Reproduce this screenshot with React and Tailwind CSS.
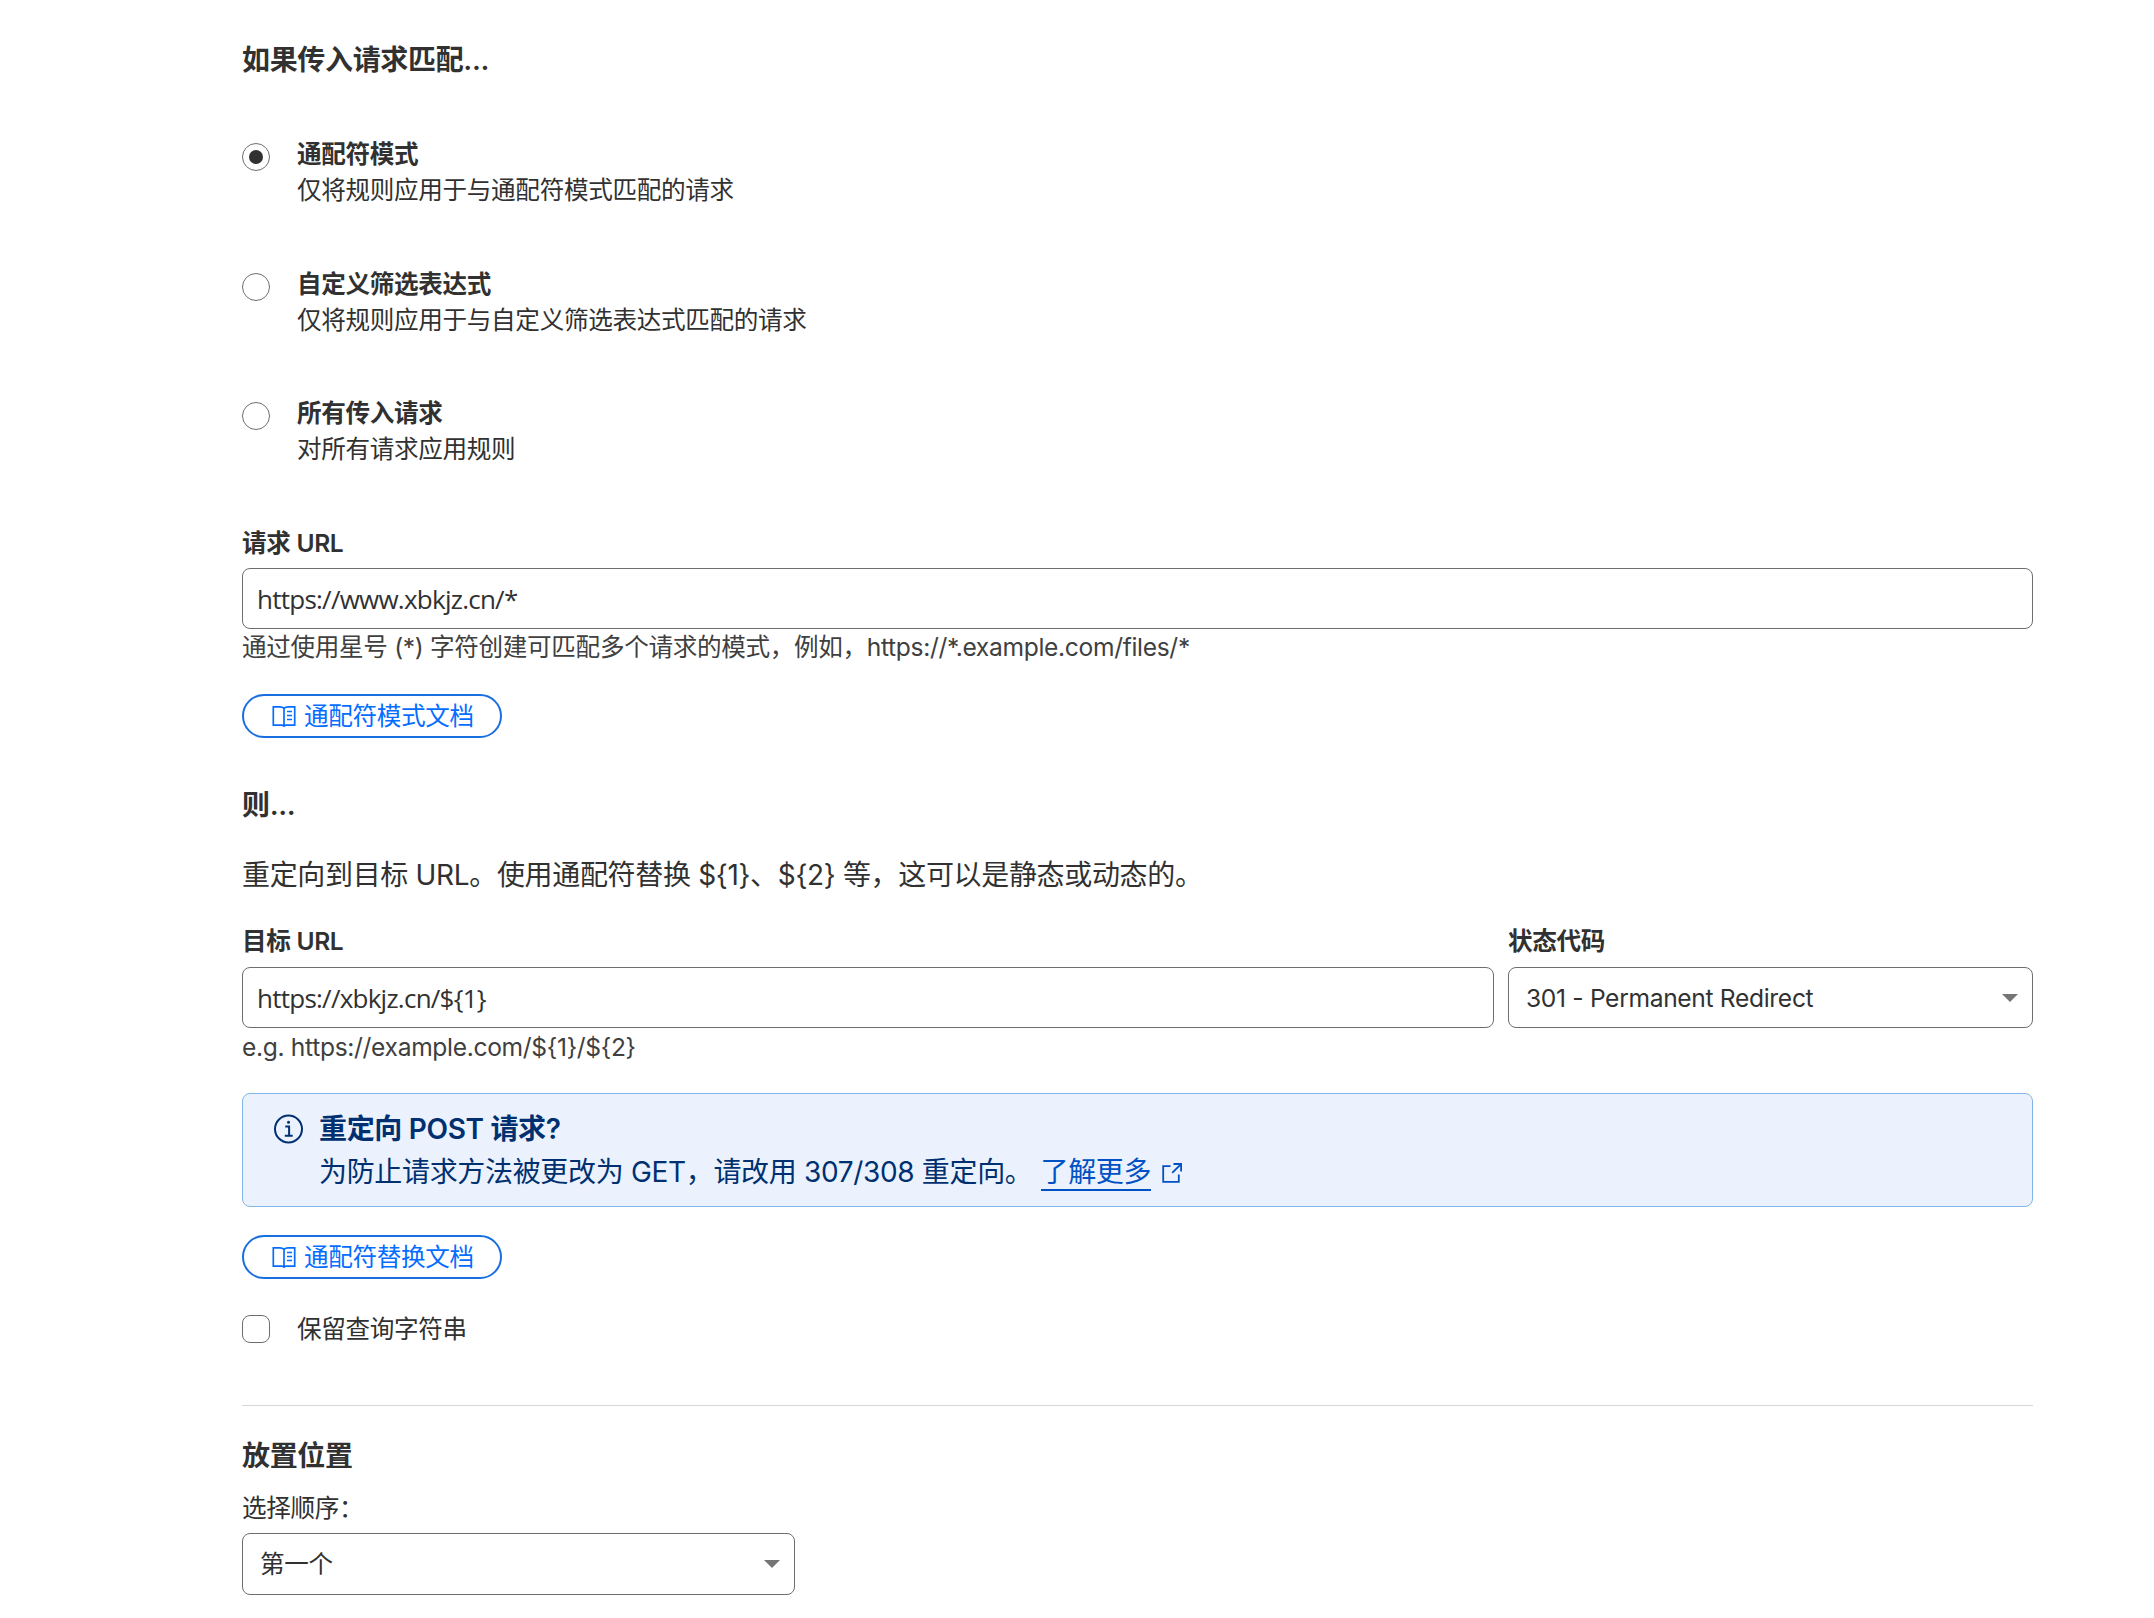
import { useState } from 'react';

const matchOptions = [
  {
    id: 'wildcard',
    title: '通配符模式',
    description: '仅将规则应用于与通配符模式匹配的请求',
  },
  {
    id: 'custom',
    title: '自定义筛选表达式',
    description: '仅将规则应用于与自定义筛选表达式匹配的请求',
  },
  { id: 'all', title: '所有传入请求', description: '对所有请求应用规则' },
];

const BookIcon = () => (
  <svg className="h-6 w-6 shrink-0" viewBox="0 0 24 24" fill="none" stroke="currentColor" strokeWidth="1.7">
    <path d="M12 4.3C10.8 3.2 9.6 2.8 8 2.8H1.3v18.4h8.2c1 0 1.7.3 2.5 1 .8-.7 1.5-1 2.5-1h8.2V2.8H16c-1.6 0-2.8.4-4 1.5zM12 4.3v17.9" />
    <path d="M15 7.500h5M15 11.500h5M15 15.500h5" />
  </svg>
);

const InfoIcon = () => (
  <svg className="h-[30px] w-[30px] shrink-0" viewBox="0 0 30 30" fill="none" stroke="currentColor" strokeWidth="2">
    <circle cx="14.500" cy="15" r="13.500" />
    <path d="M11.300 12.400h3.800v9.200M10.800 21.700h7.900" />
    <circle cx="14.500" cy="8.300" r="1.500" fill="currentColor" stroke="none" />
  </svg>
);

const ExternalIcon = () => (
  <svg className="h-[22px] w-[22px] shrink-0" viewBox="0 0 22 22" fill="none" stroke="currentColor" strokeWidth="1.800">
    <path d="M9.500 4.200H2.200v15.600h15.600v-7.300M12.500 2h7.600v7.600M20 2.100l-8.800 8.800" />
  </svg>
);

const SectionTitle = ({ children, className = '' }) => (
  <h2 className={`text-[28px] leading-[42px] font-semibold ${className}`}>{children}</h2>
);

const FieldLabel = ({ children }) => <label className="block font-semibold">{children}</label>;

const TextField = ({ value, onChange }) => (
  <input
    type="text"
    value={value}
    onChange={(e) => onChange(e.target.value)}
    className="block h-[61px] w-full rounded-lg border border-[#6d6e70] bg-white px-3.5 font-['Open_Sans','Noto_Sans_CJK_SC',sans-serif] text-[26px] tracking-[-0.75px] text-[#313131] outline-none"
  />
);

const SelectBox = ({ children, className = '' }) => (
  <button
    type="button"
    className={`flex w-full items-center justify-between rounded-lg border border-[#6d6e70] bg-white pr-3.5 pl-[17px] text-left tracking-[-0.33px] ${className}`}
  >
    {children}
    <svg className="h-2 w-4" viewBox="0 0 16 8" fill="#757575">
      <path d="M0 0h16L8 8z" />
    </svg>
  </button>
);

const DocLink = ({ children, className = '' }) => (
  <a
    href="#"
    className={`flex h-[44px] w-[260px] items-center gap-2 rounded-full border-2 border-[#1a6fe0] pl-[28px] whitespace-nowrap text-[#056dff] ${className}`}
  >
    <BookIcon />
    {children}
  </a>
);

export default function App() {
  const [mode, setMode] = useState('wildcard');
  const [requestUrl, setRequestUrl] = useState('https://www.xbkjz.cn/*');
  const [targetUrl, setTargetUrl] = useState('https://xbkjz.cn/${1}');
  const [keepQuery, setKeepQuery] = useState(false);

  return (
    <div className="min-h-[1618px] bg-white pt-[39px] pr-[121px] pl-[242px] font-['Inter','Noto_Sans_CJK_SC',sans-serif] text-[24.6px] leading-[36px] tracking-[-0.33px] text-[#313131]">
      <SectionTitle>如果传入请求匹配...</SectionTitle>

      <div className="mt-[55px] flex flex-col gap-[56.5px]">
        {matchOptions.map((option) => (
          <label key={option.id} className="flex items-start gap-[27px]">
            <input
              type="radio"
              name="mode"
              checked={mode === option.id}
              onChange={() => setMode(option.id)}
              className="mt-[7px] grid h-7 w-7 appearance-none place-content-center rounded-full border border-[#6d6e70] before:h-3.5 before:w-3.5 before:rounded-full checked:before:bg-[#313131]"
            />
            <span>
              <span className="block font-semibold">{option.title}</span>
              <span className="block leading-[37px]">{option.description}</span>
            </span>
          </label>
        ))}
      </div>

      <div className="mt-[57px]">
        <FieldLabel>请求 URL</FieldLabel>
        <div className="mt-[7px]">
          <TextField value={requestUrl} onChange={setRequestUrl} />
        </div>
        <p className="text-[#404040]">
          通过使用星号 (*) 字符创建可匹配多个请求的模式，例如，https://*.example.com/files/*
        </p>
      </div>
      <DocLink className="mt-[29px]">通配符模式文档</DocLink>

      <SectionTitle className="mt-[46px]">则...</SectionTitle>
      <p className="mt-7 text-[28px] leading-[42px]">
        {'重定向到目标 URL。使用通配符替换 ${1}、${2} 等，这可以是静态或动态的。'}
      </p>

      <div className="mt-[27px] flex gap-3.5">
        <div className="flex-1">
          <FieldLabel>目标 URL</FieldLabel>
          <div className="mt-2">
            <TextField value={targetUrl} onChange={setTargetUrl} />
          </div>
          <p className="mt-px text-[#404040]">{'e.g. https://example.com/${1}/${2}'}</p>
        </div>
        <div className="w-[525px]">
          <FieldLabel>状态代码</FieldLabel>
          <SelectBox className="mt-2 h-[61px]">301 - Permanent Redirect</SelectBox>
        </div>
      </div>

      <div className="mt-7 flex h-[114px] gap-[15px] rounded-lg border border-[#82b6e8] bg-[#ebf2fe] pt-3.5 pl-[31px] text-[28px] leading-[43px] text-[#003070]">
        <span className="mt-[6px]">
          <InfoIcon />
        </span>
        <div>
          <p className="font-semibold">重定向 POST 请求?</p>
          <p className="flex items-center">
            <span>为防止请求方法被更改为 GET，请改用 307/308 重定向。</span>
            <a href="#" className="ml-2 flex items-center gap-2.5 text-[#0051c3]">
              <span className="h-[37px] border-b-2 border-[#0051c3] leading-[37px]">了解更多</span>
              <ExternalIcon />
            </a>
          </p>
        </div>
      </div>

      <DocLink className="mt-7">通配符替换文档</DocLink>

      <label className="mt-8 flex items-center gap-[27px]">
        <input
          type="checkbox"
          checked={keepQuery}
          onChange={() => setKeepQuery(!keepQuery)}
          className="h-7 w-7 appearance-none rounded-lg border border-[#6d6e70] checked:bg-[#313131]"
        />
        保留查询字符串
      </label>

      <hr className="mt-[58px] border-[#d5d7d8]" />

      <SectionTitle className="mt-[29px]">放置位置</SectionTitle>
      <p className="mt-[13px]">选择顺序：</p>
      <SelectBox className="mt-[7px] h-[62px] max-w-[553px]">第一个</SelectBox>
    </div>
  );
}
